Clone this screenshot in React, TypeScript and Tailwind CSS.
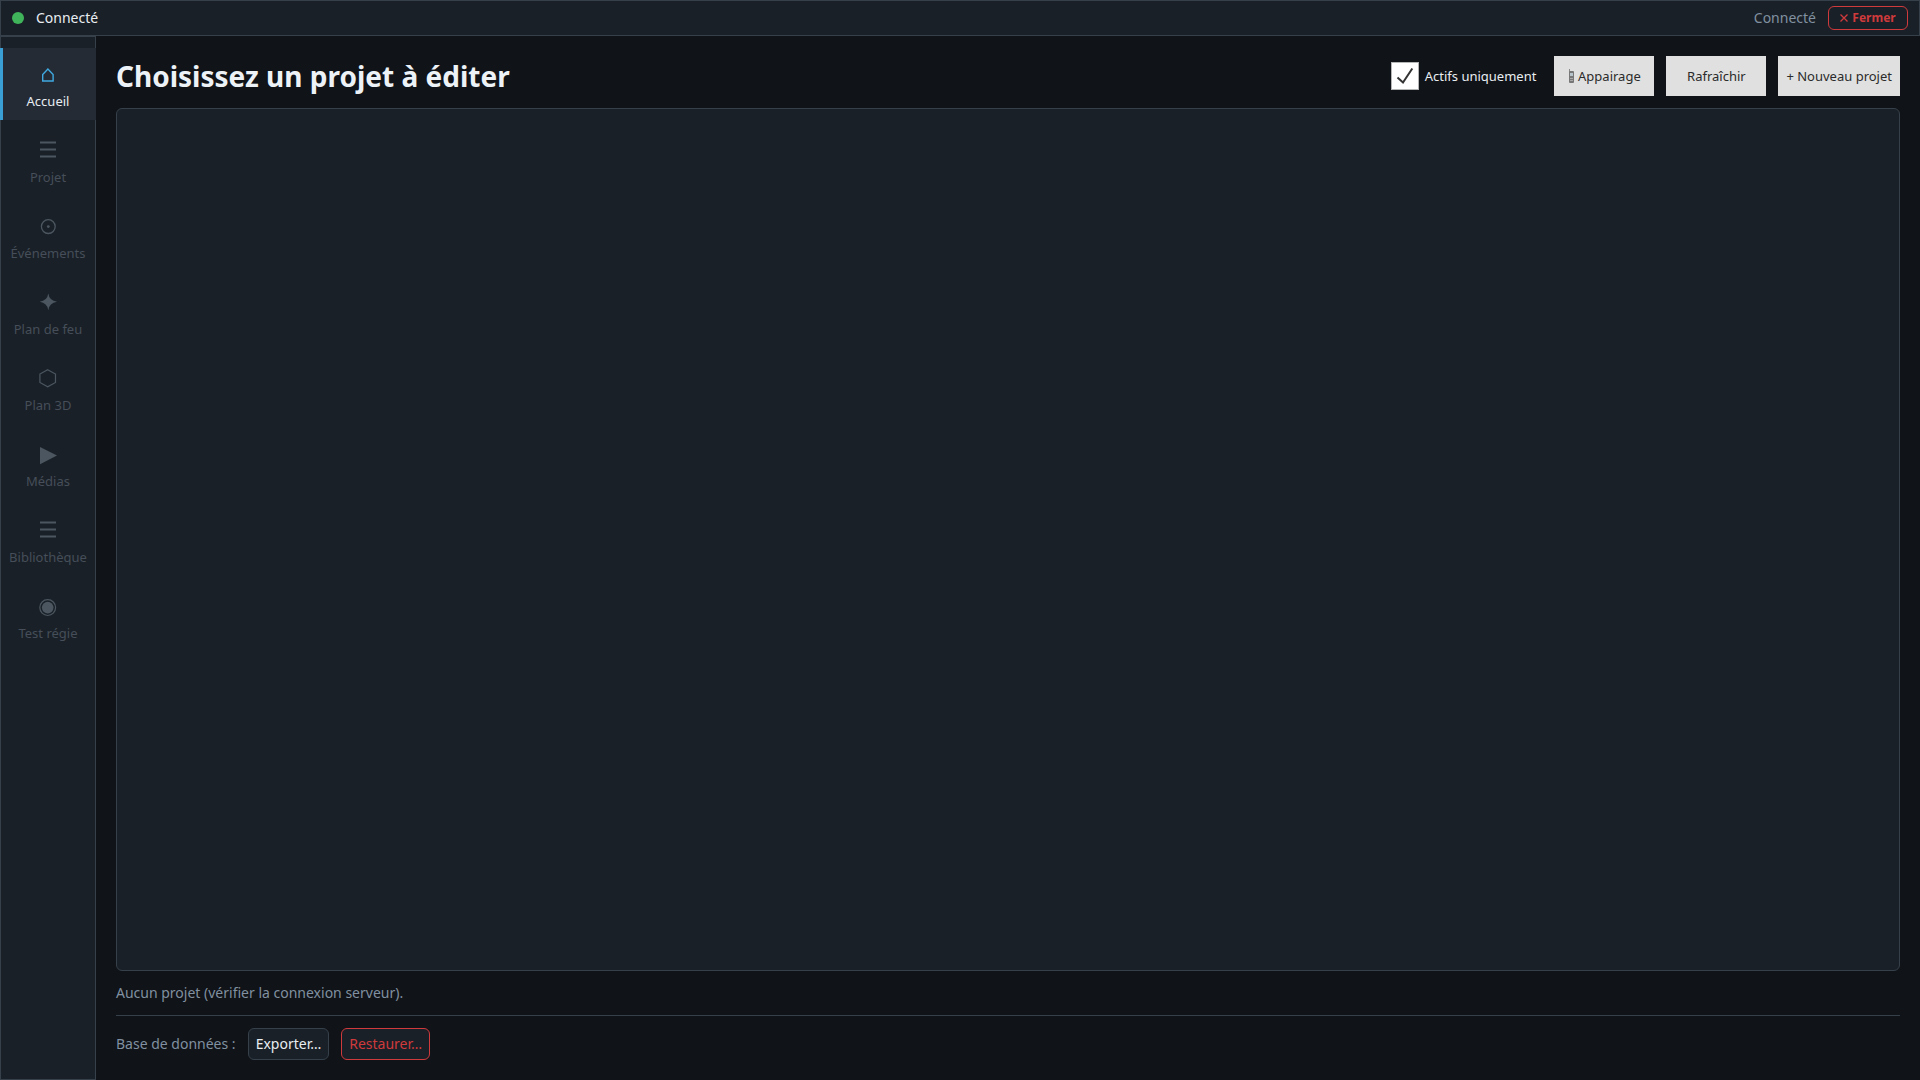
import { useState } from "react";
import type { ReactNode } from "react";

type NavItem = { id: string; label: string; icon: ReactNode };

const menuIcon = <path d="M4 2.5h16M4 9.500h16M4 16.500h16" strokeWidth="2" />;

const items: NavItem[] = [
  { id: "accueil", label: "Accueil", icon: <path d="M6.7 17v-6.500L11.900 5l5.200 5.500V17z" strokeWidth="1.4" /> },
  { id: "projet", label: "Projet", icon: menuIcon },
  {
    id: "evenements",
    label: "Événements",
    icon: (
      <>
        <circle cx="12.3" cy="10.6" r="6.900" strokeWidth="1.3" />
        <circle cx="12.3" cy="10.6" r="1.4" fill="currentColor" stroke="none" />
      </>
    ),
  },
  {
    id: "feu",
    label: "Plan de feu",
    icon: <path d="M12.3 1.500q1 7.200 8.700 8.200-7.700 1-8.700 8.500-1-7.500-8.600-8.500 7.600-1 8.600-8.200z" fill="currentColor" stroke="none" />,
  },
  { id: "plan3d", label: "Plan 3D", icon: <path d="M11.700 1.700l7.800 4.300v8.500l-7.800 4.300-7.800-4.300V6z" strokeWidth="1.200" /> },
  { id: "medias", label: "Médias", icon: <path d="M4 3l17 8.600L4 20.200z" fill="currentColor" stroke="none" /> },
  { id: "biblio", label: "Bibliothèque", icon: menuIcon },
  {
    id: "regie",
    label: "Test régie",
    icon: (
      <>
        <circle cx="11.700" cy="11.600" r="7.900" strokeWidth="1.200" />
        <circle cx="11.700" cy="11.600" r="5.800" fill="currentColor" stroke="none" />
      </>
    ),
  },
];

function Sidebar() {
  const current = "accueil";

  return (
    <nav className="flex w-24 shrink-0 flex-col gap-1 border border-[#36404b] bg-[#1a2027] pt-[11px]">
      {items.map((item) => (
        <button
          key={item.id}
          type="button"
          disabled={item.id !== current}
          className={
            item.id === current
              ? "-mx-px flex h-[72px] flex-col items-center border-l-3 border-[#3a9fd4] bg-[#252b35] pt-4 pr-[3px] text-[#3fa9e0]"
              : "flex h-[72px] flex-col items-center pt-4 text-[#4b5660]"
          }
        >
          <svg className="h-6 w-6" viewBox="0 0 24 24" fill="none" stroke="currentColor" aria-hidden="true">
            {item.icon}
          </svg>
          <span className={item.id === current ? "mt-1 text-[13px] leading-[18px] text-[#e8edf2]" : "mt-1 text-[13px] leading-[18px] text-[#454e59]"}>
            {item.label}
          </span>
        </button>
      ))}
    </nav>
  );
}

function App() {
  const [activeOnly, setActiveOnly] = useState(true);

  return (
    <div className="flex min-h-screen flex-col bg-[#101317] font-['Noto_Sans',sans-serif] text-sm text-[#e8edf2]">
      {/* Barre d'état */}
      <header className="flex h-9 items-center border border-[#36404b] bg-[#1a2027] px-[11px]">
        <span className="h-3 w-3 rounded-full bg-[#40b45a]"></span>
        <span className="ml-3">Connecté</span>
        <span className="ml-auto text-[#8090a0]">Connecté</span>
        <button type="button" className="ml-3 flex h-6 w-20 items-center justify-center gap-1 rounded-md border border-[#cf3a3c] text-xs font-bold text-[#cf3a3c]">
          <svg className="h-2 w-2" viewBox="0 0 8 8" fill="none" stroke="currentColor" strokeWidth="1.300" aria-hidden="true">
            <path d="M.5.5l7 7M7.500.5l-7 7" />
          </svg>
          Fermer
        </button>
      </header>

      <div className="flex flex-1">
        <Sidebar />

        {/* Contenu principal */}
        <main className="flex flex-1 flex-col p-5">
          <div className="flex h-10 items-center">
            <h1 className="text-[28px] leading-10 font-bold text-[#edf2f7]">Choisissez un projet à éditer</h1>
            <label className="ml-auto flex items-center gap-1.5 text-[13px]">
              <span className="grid">
                <input
                  type="checkbox"
                  checked={activeOnly}
                  onChange={(e) => setActiveOnly(e.target.checked)}
                  className="col-start-1 row-start-1 h-7 w-7 appearance-none border border-[#b5b5b5] bg-white"
                />
                {activeOnly && (
                  <svg className="pointer-events-none col-start-1 row-start-1 h-7 w-7" viewBox="0 0 28 28" fill="none" stroke="#333333" strokeWidth="2" aria-hidden="true">
                    <path d="M6.500 15.500l5.500 5L21.300 6.500" />
                  </svg>
                )}
              </span>
              Actifs uniquement
            </label>
            <div className="ml-[18px] flex gap-3 text-[13px] text-[#2b2b2b]">
              <button type="button" className="flex h-10 w-[100px] items-center justify-center gap-[3px] bg-[#e0e0e0]">
                <svg width="7" height="14" viewBox="0 0 7 14" aria-hidden="true">
                  <path d="M1 0h1v3H1z" fill="#8a8a8a" />
                  <rect x="1" y="2" width="5" height="12" rx="1" fill="#777777" />
                  <path d="M2 4h3v3H2z" fill="#b8c4cc" />
                  <path d="M2 9.500h3M2 11.500h3" stroke="#aaaaaa" />
                </svg>
                Appairage
              </button>
              <button type="button" className="h-10 w-[100px] bg-[#e0e0e0]">Rafraîchir</button>
              <button type="button" className="h-10 bg-[#e0e0e0] px-2">+ Nouveau projet</button>
            </div>
          </div>

          <section className="mt-3 flex-1 rounded-md border border-[#36404b] bg-[#1a2027]"></section>

          <p className="mt-3 text-[#8090a0]">Aucun projet (vérifier la connexion serveur).</p>

          <div className="mt-3 flex items-center gap-3 border-t border-[#36404b] pt-3">
            <span className="text-[#8090a0]">Base de données :</span>
            <button type="button" className="h-8 rounded-md border border-[#36404b] bg-[#1a2027] px-[7px]">Exporter…</button>
            <button type="button" className="h-8 rounded-md border border-[#cf3a3c] bg-[#1a2027] px-[7px] text-[#cf3a3c]">Restaurer…</button>
          </div>
        </main>
      </div>
    </div>
  );
}

export default App;
